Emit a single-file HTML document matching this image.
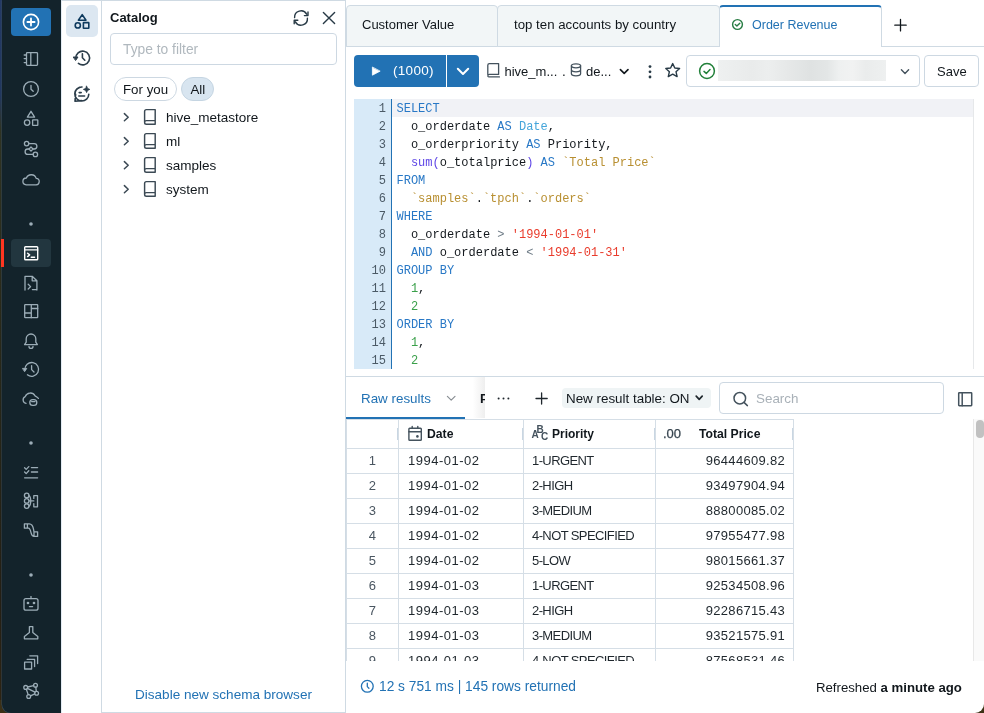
<!DOCTYPE html>
<html><head><meta charset="utf-8">
<style>
*{box-sizing:border-box;margin:0;padding:0}
html,body{width:984px;height:713px;overflow:hidden;background:#fff;font-family:"Liberation Sans",sans-serif;color:#11171c;font-size:13px}
.a{position:absolute}
svg{position:absolute;overflow:visible}
.nav svg{stroke:#9aabb5;fill:none;stroke-width:1.3;stroke-linecap:round;stroke-linejoin:round}
.t{white-space:nowrap;line-height:16px}
.code{font-family:"Liberation Mono",monospace;font-size:12px;line-height:18px;white-space:pre}
.k{color:#2878c6}.d{color:#45a5da}.f{color:#5f47e6}.b{color:#b88f31}.s{color:#e93c2c}.n{color:#3aa04a}.o{color:#6f7c87}
.c{line-height:26px;white-space:nowrap;font-size:13px;color:#1f272d;letter-spacing:.3px}
.cp{letter-spacing:-.6px}
</style></head><body><div style="position:absolute;left:0;top:0;width:984px;height:713px;will-change:transform">
<!-- wallpaper strip -->
<div class="a" style="left:0;top:0;width:4px;height:713px;background:linear-gradient(#243a66 0,#21375f 95px,#2f3322 130px,#2a2a1a 300px,#262618 400px,#241f14 600px,#2e2412 713px)"></div>
<div class="a" style="left:0;top:700px;width:14px;height:13px;background:#3b3016"></div>
<!-- dark nav -->
<div class="a nav" id="nav" style="left:1.5px;top:0;width:59.5px;height:712.5px;background:#13232b;border-bottom-left-radius:9px;box-shadow:-0.5px 0.5px 0 #34495a">
</div>

<!-- secondary sidebar -->
<div class="a" style="left:61px;top:0;width:41px;height:713px;background:#fff;border-top:1px solid #cfdae3;border-right:1px solid #cfdae3;border-left:1px solid #e3ebf3"></div>
<div class="a" style="left:66px;top:5px;width:32px;height:32px;background:#dce7f1;border-radius:5px"></div>

<!-- catalog panel -->
<div class="a" style="left:101px;top:0;width:245px;height:713px;border-top:1px solid #cfdae3;border-right:1px solid #cfdae3;border-bottom:1px solid #cfdae3"></div>
<div class="a t" style="left:110px;top:10px;font-weight:700;font-size:13px">Catalog</div>
<div class="a" style="left:110px;top:33px;width:227px;height:32px;border:1px solid #cdd8e2;border-radius:4px"></div>
<div class="a t" style="left:123px;top:42px;color:#b0b8be;font-size:13.8px">Type to filter</div>
<div class="a" style="left:114px;top:77px;width:63px;height:24px;border:1px solid #cdd8e2;border-radius:12px"></div>
<div class="a t" style="left:123px;top:82px;font-size:13.3px">For you</div>
<div class="a" style="left:181px;top:77px;width:33px;height:24px;border:1px solid #c5d5e2;background:#d8e5f0;border-radius:12px"></div>
<div class="a t" style="left:190.5px;top:82px;font-size:13.3px">All</div>

<div class="a t" style="left:166px;top:110px;font-size:13.5px">hive_metastore</div>
<div class="a t" style="left:166px;top:134px;font-size:13.5px">ml</div>
<div class="a t" style="left:166px;top:158px;font-size:13.5px">samples</div>
<div class="a t" style="left:166px;top:182px;font-size:13.5px">system</div>

<div class="a t" style="left:135px;top:687px;color:#2272b4;font-size:13.55px">Disable new schema browser</div>

<!-- main -->
<!-- tabs -->
<div class="a" style="left:346px;top:46px;width:638px;height:1px;background:#cfdae3"></div>
<div class="a" style="left:346px;top:5px;width:152px;height:42px;background:#f2f6f7;border:1px solid #cfdae3;border-top-left-radius:4px;border-top-right-radius:4px"></div>
<div class="a t" style="left:362px;top:17px">Customer Value</div>
<div class="a" style="left:497px;top:5px;width:223px;height:42px;background:#f2f6f7;border:1px solid #cfdae3;border-top-left-radius:4px;border-top-right-radius:4px"></div>
<div class="a t" style="left:514px;top:17px;font-size:13.25px">top ten accounts by country</div>
<div class="a" style="left:719px;top:5px;width:163px;height:42px;background:#fff;border:1px solid #cfdae3;border-top:2px solid #2272b4;border-bottom:none;border-top-left-radius:4px;border-top-right-radius:4px"></div>
<div class="a t" style="left:752px;top:17px;color:#2272b4;font-size:12.5px">Order Revenue</div>

<!-- toolbar -->
<div class="a" style="left:354px;top:55px;width:125px;height:32px;background:#2272b4;border-radius:4px"></div>
<div class="a" style="left:446px;top:55px;width:1px;height:32px;background:#fff"></div>
<div class="a t" style="left:393px;top:63px;color:#fff;font-size:13.5px;letter-spacing:.3px">(1000)</div>
<div class="a t" style="left:504.5px;top:64px;font-size:13px">hive_m...</div>
<div class="a t" style="left:562px;top:64px;font-size:13.5px">.</div>
<div class="a t" style="left:586px;top:64px;font-size:13px">de...</div>
<div class="a" style="left:686px;top:55px;width:234px;height:32px;border:1px solid #cdd8e2;border-radius:4px"></div>
<div class="a" style="left:718px;top:60px;width:168px;height:21px;background:linear-gradient(90deg,#eef0f0 0%,#e9ebeb 20%,#eceeee 30%,#e6e8e8 42%,#dfe2e2 55%,#e3e6e6 65%,#eef0f0 72%,#f1f2f2 80%,#eaecec 88%,#eef0f0 100%);filter:blur(0.6px)"></div>
<div class="a" style="left:924px;top:55px;width:55px;height:32px;border:1px solid #cdd8e2;border-radius:4px"></div>
<div class="a t" style="left:937px;top:64px">Save</div>

<!-- editor -->
<div class="a" style="left:354px;top:99px;width:37px;height:270px;background:#d8eaf8"></div>
<div class="a" style="left:391px;top:99px;width:1px;height:270px;background:#2272b4"></div>
<div class="a" style="left:392px;top:99px;width:581px;height:18px;background:#f1f2f6"></div>
<div class="a" style="left:973px;top:99px;width:1px;height:270px;background:#e6e8ea"></div>

<!-- code -->
<div class="a code" style="left:354px;top:100px;width:32px;text-align:right;color:#4b5a66">1<br>2<br>3<br>4<br>5<br>6<br>7<br>8<br>9<br>10<br>11<br>12<br>13<br>14<br>15</div>
<div class="a code" style="left:396.5px;top:100px;color:#14191e"><span class="k">SELECT</span><br>  o_orderdate <span class="k">AS</span> <span class="d">Date</span>,<br>  o_orderpriority <span class="k">AS</span> Priority,<br>  <span class="f">sum(</span>o_totalprice<span class="f">)</span> <span class="k">AS</span> <span class="b">`Total Price`</span><br><span class="k">FROM</span><br>  <span class="b">`samples`</span>.<span class="b">`tpch`</span>.<span class="b">`orders`</span><br><span class="k">WHERE</span><br>  o_orderdate <span class="o">&gt;</span> <span class="s">'1994-01-01'</span><br>  <span class="k">AND</span> o_orderdate <span class="o">&lt;</span> <span class="s">'1994-01-31'</span><br><span class="k">GROUP BY</span><br>  <span class="n">1</span>,<br>  <span class="n">2</span><br><span class="k">ORDER BY</span><br>  <span class="n">1</span>,<br>  <span class="n">2</span></div>
<!-- results -->
<div class="a" style="left:346px;top:376px;width:638px;height:1px;background:#cfdae3"></div>
<div class="a t" style="left:361px;top:391px;color:#2272b4;font-size:13.4px">Raw results</div>
<div class="a" style="left:346px;top:417px;width:119px;height:2px;background:#2272b4"></div>

<!-- table -->
<div class="a" style="left:346px;top:419px;width:627px;height:242px;overflow:hidden">
<div class="a" style="left:0;top:0;width:448px;height:30px;border-top:1px solid #d5dee6;border-bottom:1px solid #d5dee6"></div><div class="a" style="left:51px;top:9px;width:1px;height:12px;background:#c9d6e2"></div><div class="a" style="left:176px;top:9px;width:1px;height:12px;background:#c9d6e2"></div><div class="a" style="left:308px;top:9px;width:1px;height:12px;background:#c9d6e2"></div><div class="a" style="left:446px;top:9px;width:1px;height:12px;background:#c9d6e2"></div>
<div class="a" style="left:0px;top:0;width:1px;height:242px;background:#d5dee6"></div>
<div class="a" style="left:52px;top:0;width:1px;height:242px;background:#d5dee6"></div>
<div class="a" style="left:177px;top:0;width:1px;height:242px;background:#d5dee6"></div>
<div class="a" style="left:309px;top:0;width:1px;height:242px;background:#d5dee6"></div>
<div class="a" style="left:447px;top:0;width:1px;height:242px;background:#d5dee6"></div>
<div class="a" style="left:0;top:54px;width:448px;height:1px;background:#d5dee6"></div>
<div class="a c" style="color:#4a5661;left:1px;top:29px;width:51px;height:25px;text-align:center">1</div>
<div class="a c" style="letter-spacing:.5px;left:62px;top:29px">1994-01-02</div>
<div class="a c cp" style="left:186px;top:29px">1-URGENT</div>
<div class="a c" style="left:310px;top:29px;width:129px;text-align:right">96444609.82</div>
<div class="a" style="left:0;top:79px;width:448px;height:1px;background:#d5dee6"></div>
<div class="a c" style="color:#4a5661;left:1px;top:54px;width:51px;height:25px;text-align:center">2</div>
<div class="a c" style="letter-spacing:.5px;left:62px;top:54px">1994-01-02</div>
<div class="a c cp" style="left:186px;top:54px">2-HIGH</div>
<div class="a c" style="left:310px;top:54px;width:129px;text-align:right">93497904.94</div>
<div class="a" style="left:0;top:104px;width:448px;height:1px;background:#d5dee6"></div>
<div class="a c" style="color:#4a5661;left:1px;top:79px;width:51px;height:25px;text-align:center">3</div>
<div class="a c" style="letter-spacing:.5px;left:62px;top:79px">1994-01-02</div>
<div class="a c cp" style="left:186px;top:79px">3-MEDIUM</div>
<div class="a c" style="left:310px;top:79px;width:129px;text-align:right">88800085.02</div>
<div class="a" style="left:0;top:129px;width:448px;height:1px;background:#d5dee6"></div>
<div class="a c" style="color:#4a5661;left:1px;top:104px;width:51px;height:25px;text-align:center">4</div>
<div class="a c" style="letter-spacing:.5px;left:62px;top:104px">1994-01-02</div>
<div class="a c cp" style="left:186px;top:104px">4-NOT SPECIFIED</div>
<div class="a c" style="left:310px;top:104px;width:129px;text-align:right">97955477.98</div>
<div class="a" style="left:0;top:154px;width:448px;height:1px;background:#d5dee6"></div>
<div class="a c" style="color:#4a5661;left:1px;top:129px;width:51px;height:25px;text-align:center">5</div>
<div class="a c" style="letter-spacing:.5px;left:62px;top:129px">1994-01-02</div>
<div class="a c cp" style="left:186px;top:129px">5-LOW</div>
<div class="a c" style="left:310px;top:129px;width:129px;text-align:right">98015661.37</div>
<div class="a" style="left:0;top:179px;width:448px;height:1px;background:#d5dee6"></div>
<div class="a c" style="color:#4a5661;left:1px;top:154px;width:51px;height:25px;text-align:center">6</div>
<div class="a c" style="letter-spacing:.5px;left:62px;top:154px">1994-01-03</div>
<div class="a c cp" style="left:186px;top:154px">1-URGENT</div>
<div class="a c" style="left:310px;top:154px;width:129px;text-align:right">92534508.96</div>
<div class="a" style="left:0;top:204px;width:448px;height:1px;background:#d5dee6"></div>
<div class="a c" style="color:#4a5661;left:1px;top:179px;width:51px;height:25px;text-align:center">7</div>
<div class="a c" style="letter-spacing:.5px;left:62px;top:179px">1994-01-03</div>
<div class="a c cp" style="left:186px;top:179px">2-HIGH</div>
<div class="a c" style="left:310px;top:179px;width:129px;text-align:right">92286715.43</div>
<div class="a" style="left:0;top:229px;width:448px;height:1px;background:#d5dee6"></div>
<div class="a c" style="color:#4a5661;left:1px;top:204px;width:51px;height:25px;text-align:center">8</div>
<div class="a c" style="letter-spacing:.5px;left:62px;top:204px">1994-01-03</div>
<div class="a c cp" style="left:186px;top:204px">3-MEDIUM</div>
<div class="a c" style="left:310px;top:204px;width:129px;text-align:right">93521575.91</div>
<div class="a" style="left:0;top:254px;width:448px;height:1px;background:#d5dee6"></div>
<div class="a c" style="color:#4a5661;left:1px;top:229px;width:51px;height:25px;text-align:center">9</div>
<div class="a c" style="letter-spacing:.5px;left:62px;top:229px">1994-01-03</div>
<div class="a c cp" style="left:186px;top:229px">4-NOT SPECIFIED</div>
<div class="a c" style="left:310px;top:229px;width:129px;text-align:right">87568531.46</div>
</div>

<!-- results toolbar extras -->
<div class="a" style="left:473px;top:377px;width:12px;height:41px;background:linear-gradient(90deg,rgba(240,240,240,0),rgba(235,235,235,.8))"></div>
<div class="a t" style="left:480px;top:391px;font-weight:700;font-size:13px;width:5px;overflow:hidden">P</div>
<div class="a" style="left:485px;top:377px;width:488px;height:41px;background:#fff"></div>
<div class="a" style="left:562px;top:388px;width:149px;height:20px;background:#eff4f5;border-radius:4px"></div>
<div class="a t" style="left:566px;top:391px;font-size:13.4px">New result table: ON</div>
<div class="a" style="left:719px;top:382px;width:225px;height:32px;border:1px solid #cdd8e2;border-radius:4px"></div>
<div class="a t" style="left:756px;top:391px;color:#a9b1b8;font-size:13.4px">Search</div>
<!-- header texts -->
<div class="a t" style="left:427px;top:426px;font-weight:700;font-size:12.2px">Date</div>
<div class="a" style="left:531.5px;top:431px;font-weight:700;font-size:10px;color:#44525d;line-height:8px">A</div>
<div class="a" style="left:536.5px;top:426px;font-weight:700;font-size:10px;color:#44525d;line-height:8px">B</div>
<div class="a" style="left:541px;top:433px;font-weight:700;font-size:10px;color:#44525d;line-height:8px">C</div>
<div class="a t" style="left:552px;top:426px;font-weight:700;font-size:12px">Priority</div>
<div class="a t" style="left:663px;top:426px;font-size:13px;color:#36444f;-webkit-text-stroke:0.25px #36444f">.00</div>
<div class="a t" style="left:699px;top:426px;font-weight:700;font-size:12.2px">Total Price</div>
<!-- scrollbar -->
<div class="a" style="left:973px;top:419px;width:11px;height:242px;background:#fafafa;border-left:1px solid #e8e8e8"></div>
<div class="a" style="left:976px;top:420px;width:8px;height:18px;background:#c1c1c1;border-radius:4px"></div>
<div class="a t" style="left:379px;top:679px;color:#2272b4;font-size:13.75px">12 s 751 ms | 145 rows returned</div>
<div class="a t" style="left:816px;top:680px;font-size:13.2px">Refreshed <b>a minute ago</b></div>
<div class="a" style="left:975px;top:704px;width:9px;height:9px;background:#3d3216"></div><div class="a" style="left:975px;top:704px;width:9px;height:9px;background:#fff;border-bottom-right-radius:9px"></div>
<!-- ICONS overlay -->
<svg class="a" style="left:0;top:0" width="984" height="713" viewBox="0 0 984 713" fill="none" stroke-linecap="round" stroke-linejoin="round">
<!-- nav: new button -->
<rect x="11" y="8" width="40" height="28" rx="4" fill="#2272b4" stroke="none"/>
<g stroke="#fff" stroke-width="1.6"><circle cx="31" cy="22" r="7.6"/><path d="M27.4 22H34.6M31 18.4V25.6" stroke-width="1.8"/></g>
<!-- selected sql editor bg + red bar -->
<rect x="11" y="239" width="40" height="28" rx="4" fill="#22363f" stroke="none"/>
<rect x="1" y="239" width="3" height="28" fill="#ff3621" stroke="none"/>
<g stroke="#9cadb7" stroke-width="1.3">
 <!-- notebook -->
 <rect x="26.5" y="52.6" width="11" height="12.8" rx="0.8"/><path d="M30.8 52.6V65.4M24.2 55H26.5M24.2 58.6H26.5M24.2 62.6H26.5"/>
 <!-- clock -->
 <circle cx="31" cy="89" r="7.4"/><path d="M31 85.3V89.2L33.2 91.3"/>
 <!-- shapes -->
 <path d="M31 111.3L34.6 117.2H27.4Z"/><circle cx="27.1" cy="122.6" r="2.7"/><rect x="32.6" y="119.9" width="5.2" height="5.4" rx="0.4"/>
 <!-- workflow -->
 <circle cx="26.6" cy="143.6" r="2.2"/><circle cx="35.4" cy="154.4" r="2.2"/>
 <path d="M28.8 143.6H34.2A2.7 2.7 0 0 1 34.2 149H27.8A2.7 2.7 0 0 0 27.8 154.4H33.2"/>
 <path d="M31 147L33 149L31 151L29 149Z" fill="#13232b"/>
 <!-- cloud -->
 <path d="M26.2 184.8H35.8A3.2 3.2 0 0 0 36.2 178.4A5.2 5.2 0 0 0 26.4 178A3.4 3.4 0 0 0 26.2 184.8Z"/>
 <!-- queries -->
 <path d="M25 283V276.3H32.2L36.9 280.8V290M32.2 276.3V280.8H36.9M25 283V290M28.2 284.2L30.6 286.6L28.2 289M32.4 289.6H36.9"/>
 <!-- dashboards -->
 <rect x="24.7" y="304.7" width="13" height="13" rx="0.6"/><path d="M31.3 304.7V317.7M24.7 313H31.3M31.3 308.5H37.7"/>
 <!-- bell -->
 <path d="M24.6 344.6H37.4L35.8 342.2V338.8A4.8 4.8 0 0 0 26.2 338.8V342.2Z"/><path d="M29 346.4A2 2 0 0 0 33 346.4"/>
 <!-- history -->
 <path d="M24.8 369.8A6.9 6.9 0 1 1 27.4 374.8"/><path d="M22.8 368.4L26.8 368.4L24.8 371.4Z" fill="#a3b4be" stroke-width="0.9"/><path d="M31.6 365.6V369.6L34 372"/>
 <!-- cloud db -->
 <path d="M26 403.4A3.6 3.6 0 0 1 25.2 396.6A5.4 5.4 0 0 1 35 395.8Q37 396.8 38.4 398.4"/>
 <rect x="29.8" y="399.6" width="7" height="5.8" rx="2.9"/><path d="M31.6 401.6H35"/>
 <!-- checklist -->
 <path d="M24.6 467.8L26.2 469.4L28.8 466.6M24.6 472L26.2 473.6L28.8 470.8M31.4 467.6H37.6M31.4 472H37.6M24.6 477.8H37.6"/>
 <!-- pipelines -->
 <circle cx="26.7" cy="495.4" r="2.3"/><circle cx="26.7" cy="500.9" r="2.3"/><circle cx="26.7" cy="506.1" r="2.3"/>
 <path d="M28.9 495.6Q30.6 496.4 30.8 500.9Q30.6 505.4 28.9 506.2M29 500.9H33.8M33.8 495.6H37.5V506.8H33.8M33.8 495.6V498.4M33.8 503.6V506.8"/>
 <!-- flow -->
 <path d="M24.4 523.8H27.4V528.2H24.4Z M34 531.8H37.6V536.4H34Z M27.4 523.8H29.2C32.2 523.8 33.2 527.2 33.6 529.6L34 531.8 M27.4 528.2H28.4C30 528.2 30.6 530.8 31 532.6C31.6 535 32.4 536.4 34 536.4"/>
 <!-- robot -->
 <path d="M31 596.6V598.6"/><rect x="24" y="598.6" width="14" height="11.6" rx="2"/><path d="M29.4 606.6H32.6"/>
 <circle cx="28" cy="603" r="0.7" fill="#a3b4be"/><circle cx="34" cy="603" r="0.7" fill="#a3b4be"/>
 <!-- flask -->
 <path d="M29.4 626.6H32.8V632.4L37.8 636.4V638.8H24.4V636.4L29.4 632.4Z"/>
 <!-- copy -->
 <rect x="24.6" y="662.2" width="7" height="6.8"/><path d="M27.2 659.4H34.6V666.6M29.8 655.8H37.6V663.6"/>
 <!-- graph -->
 <circle cx="25.7" cy="687.4" r="1.9"/><circle cx="35.5" cy="685.3" r="1.9"/><circle cx="36.6" cy="693.2" r="1.9"/><circle cx="28.7" cy="696.5" r="1.9"/>
 <path d="M27.6 687L33.6 685.7M35.8 687.2L36.3 691.3M34.8 693.9L30.5 695.8M28.2 694.6L26.3 689.2M27.4 688.3L35 692.2"/>
</g>
<g fill="#9cadb7" stroke="none"><circle cx="31" cy="224" r="1.8"/><circle cx="31" cy="443" r="1.8"/><circle cx="31" cy="575" r="1.8"/></g>
<!-- sql editor icon white -->
<g stroke="#fff" stroke-width="1.4">
 <rect x="24.7" y="246.7" width="13" height="13" rx="0.8"/><path d="M24.7 249.9H37.7M27.6 253.2L29.6 254.9L27.6 256.6M31.2 257.2H34.6"/>
</g>
<!-- secondary sidebar -->
<g stroke="#0e3a5e" stroke-width="1.6">
 <path d="M82.2 14.6L86 20.2H78.4Z"/><circle cx="77.8" cy="25.4" r="2.6"/><rect x="83.4" y="22.6" width="5.4" height="5.6" rx="0.3"/>
</g>
<g stroke="#2b3d4a" stroke-width="1.6">
 <path d="M75.8 58.4A6.9 6.9 0 1 1 78.4 63.4"/><path d="M73.6 57L78 57L75.8 60.2Z" fill="#2b3d4a" stroke-width="1"/><path d="M82.4 53.8V57.8L84.8 60.2"/>
 <path d="M82 87A7 7 0 1 0 88.8 94.2M75 94.2A7 7 0 0 1 79.6 87.4M75.6 94.4L75 101.2L81.6 100.6"/>
 <path d="M79.2 92.6H81.2M78.8 96H84.6"/>
 <path d="M86.6 86.2L87.6 88.4L89.8 89.4L87.6 90.4L86.6 92.6L85.6 90.4L83.4 89.4L85.6 88.4Z" fill="#2b3d4a" stroke-width="0.8"/>
</g>
<!-- catalog -->
<g stroke="#283a46" stroke-width="1.4">
 <path d="M294.6 17.6A6.4 6.4 0 0 1 306.6 14.2M307.4 18.2A6.4 6.4 0 0 1 295.4 21.8M308 12V15.6H304.4M294.2 23.8V20.2H297.8"/>
 <path d="M323.4 12.4L334.6 23.6M334.6 12.4L323.4 23.6"/>
</g>
<g stroke="#3b4954" stroke-width="1.5">
 <path d="M124.4 113.6L128.2 117.2L124.4 120.8M124.4 137.6L128.2 141.2L124.4 144.8M124.4 161.6L128.2 165.2L124.4 168.8M124.4 185.6L128.2 189.2L124.4 192.8"/>
</g>
<g stroke="#3b4954" stroke-width="1.45" id="books">
 <path d="M144.6 122V111.4A1.8 1.8 0 0 1 146.4 109.6H155.2V124.2H146.4A1.8 1.8 0 0 1 144.6 122.4A1.8 1.8 0 0 1 146.4 120.6H155.2"/>
 <path transform="translate(0 24)" d="M144.6 122V111.4A1.8 1.8 0 0 1 146.4 109.6H155.2V124.2H146.4A1.8 1.8 0 0 1 144.6 122.4A1.8 1.8 0 0 1 146.4 120.6H155.2"/>
 <path transform="translate(0 48)" d="M144.6 122V111.4A1.8 1.8 0 0 1 146.4 109.6H155.2V124.2H146.4A1.8 1.8 0 0 1 144.6 122.4A1.8 1.8 0 0 1 146.4 120.6H155.2"/>
 <path transform="translate(0 72)" d="M144.6 122V111.4A1.8 1.8 0 0 1 146.4 109.6H155.2V124.2H146.4A1.8 1.8 0 0 1 144.6 122.4A1.8 1.8 0 0 1 146.4 120.6H155.2"/>
</g>
<!-- tabs -->
<g stroke="#277c43" stroke-width="1.4"><circle cx="737.5" cy="24.5" r="4.9"/><path d="M735.3 24.6L736.9 26.1L739.8 23.2"/></g>
<path d="M894.8 25.2H906.2M900.5 19.5V30.9" stroke="#11171c" stroke-width="1.3"/>
<!-- toolbar -->
<path d="M372.4 67.4V75.2L379.8 71.3Z" fill="#fff" stroke="#fff" stroke-width="0.8"/>
<path d="M457.8 68.8L463 74L468.2 68.8" stroke="#fff" stroke-width="2"/>
<g stroke="#44525d" stroke-width="1.3">
 <path d="M487.8 74.6V65.2A1.6 1.6 0 0 1 489.4 63.6H498.6V74.4H489.4A1.6 1.6 0 0 0 487.8 76A1.0 1.0 0 0 0 488.8 76.9H499.4"/>
 <ellipse cx="576" cy="65.8" rx="4.6" ry="2"/><path d="M571.4 65.8V73.8A4.6 2 0 0 0 580.6 73.8V65.8M571.4 69.8A4.6 2 0 0 0 580.6 69.8"/>
</g>
<path d="M620.4 69.6L624.2 73.4L628 69.6" stroke="#11171c" stroke-width="1.6"/>
<g fill="#283a46"><circle cx="650" cy="66.6" r="1.4"/><circle cx="650" cy="71.8" r="1.4"/><circle cx="650" cy="77" r="1.4"/></g>
<path d="M672.7 63.6L674.8 68L679.6 68.5L676 71.7L677.1 76.6L672.7 74.1L668.3 76.6L669.4 71.7L665.8 68.5L670.6 68Z" stroke="#283a46" stroke-width="1.4"/>
<g stroke="#22803a" stroke-width="1.5"><circle cx="707" cy="71" r="7.4"/><path d="M704 71.4L706.3 73.4L710 69.6"/></g>
<path d="M901.4 69.8L905 73.4L908.6 69.8" stroke="#44525d" stroke-width="1.4"/>
<!-- results -->
<path d="M447.4 396.4L451.2 400.2L455 396.4" stroke="#8a8f94" stroke-width="1.2"/>
<g fill="#1f272d"><circle cx="498.6" cy="398.4" r="1"/><circle cx="503.5" cy="398.4" r="1"/><circle cx="508.4" cy="398.4" r="1"/></g>
<path d="M536 398.5H547.2M541.6 392.9V404.1" stroke="#1f272d" stroke-width="1.3"/>
<path d="M696.2 396.2L699.2 399.4L702.2 396.2" stroke="#1f272d" stroke-width="1.7"/>
<g stroke="#44525d" stroke-width="1.5"><circle cx="739.8" cy="398.2" r="5.8"/><path d="M744 402.4L747.4 405.6"/></g>
<g stroke="#44525d" stroke-width="1.5"><rect x="958.7" y="392.7" width="13" height="13" rx="0.6"/><path d="M962.2 392.7V405.7"/></g>
<!-- calendar -->
<g stroke="#44525d" stroke-width="1.4"><rect x="408.9" y="428.3" width="12.4" height="12" rx="0.8"/><path d="M408.9 431.8H421.3M412.2 426.4V428.3M417.8 426.4V428.3"/></g>
<circle cx="417.4" cy="436.4" r="1.3" fill="#44525d"/>
<!-- status clock -->
<g stroke="#2272b4" stroke-width="1.3"><circle cx="367.3" cy="686.3" r="5.9"/><path d="M367.3 683.2V686.6L368.9 688.2"/></g>
</svg>

</div></body></html>
